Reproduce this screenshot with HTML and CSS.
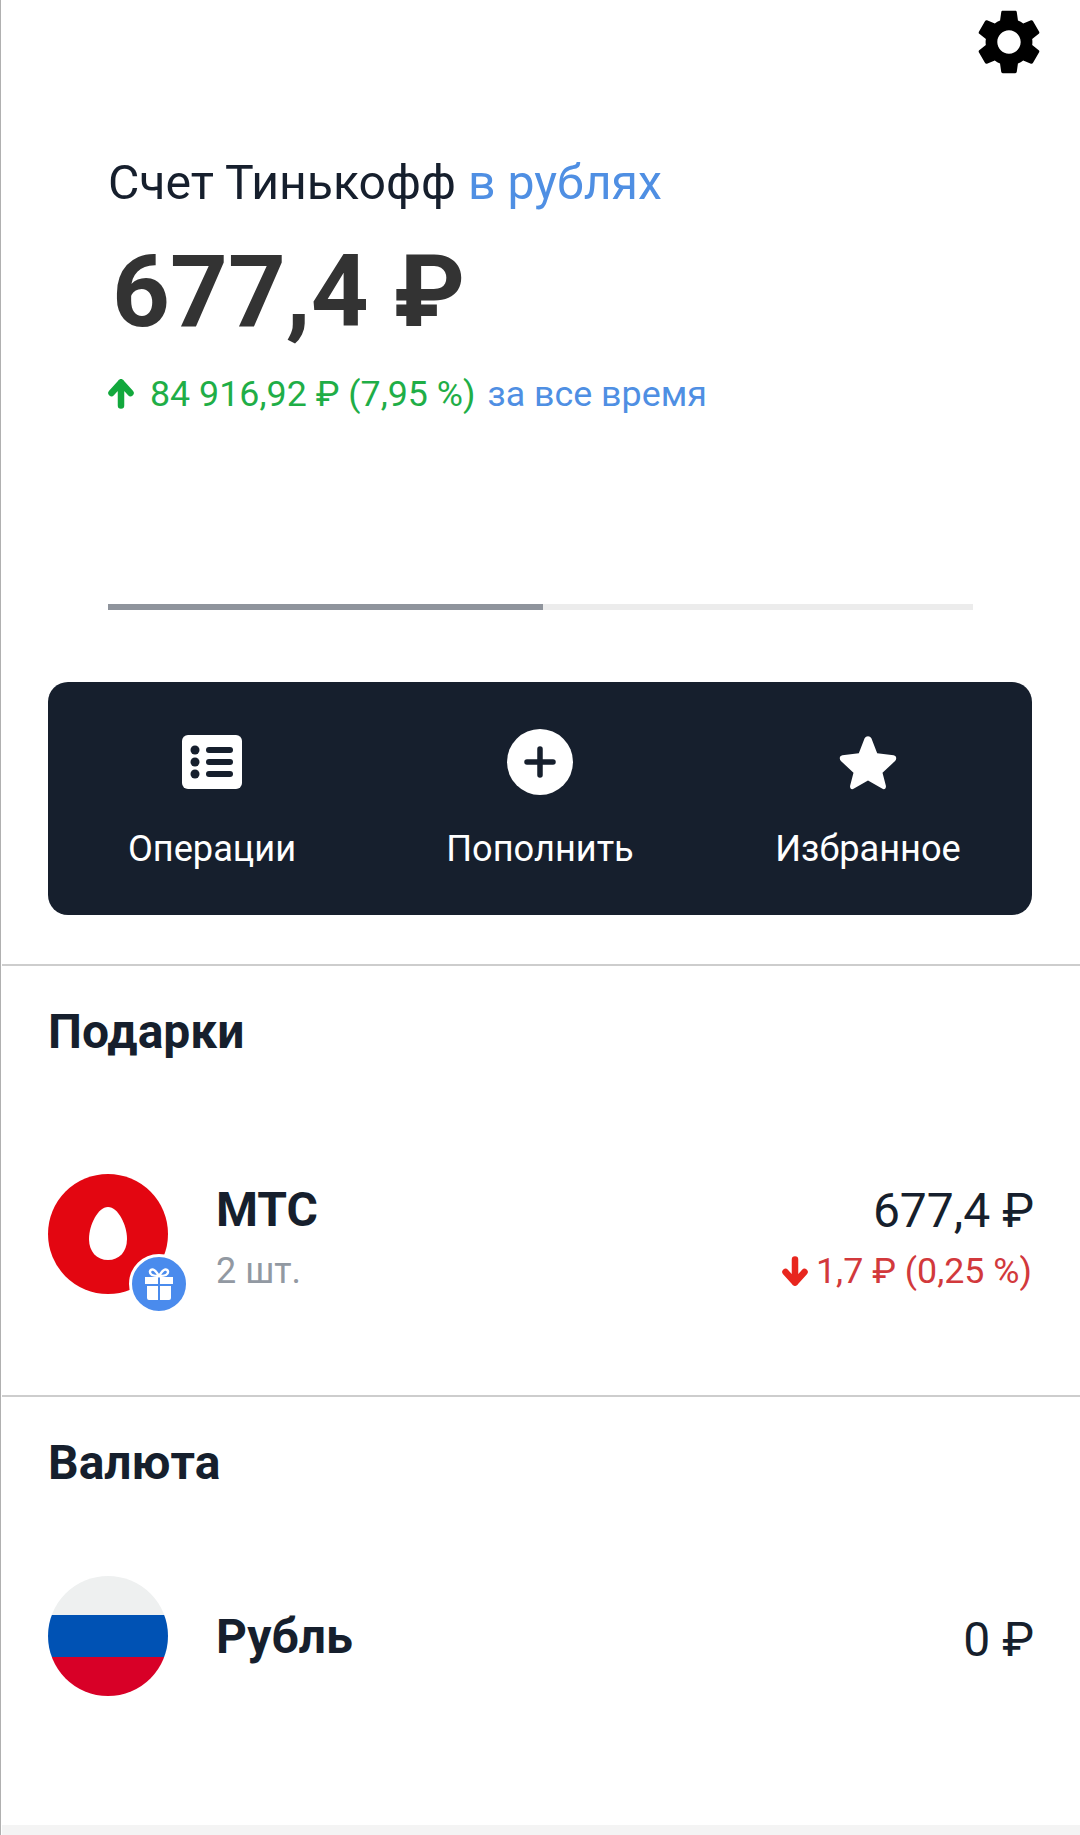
FILE: index.html
```html
<!DOCTYPE html>
<html lang="ru">
<head>
    <meta charset="UTF-8">
    <meta name="viewport" content="width=device-width, initial-scale=1.0">
    <title>Счет Тинькофф</title>
    <link rel="stylesheet" href="styles.css">
</head>
<body>
    <div class="settings-row">
        <svg class="gear" viewBox="0 0 24 24"><path d="M19.14 12.94c.04-.3.06-.61.06-.94 0-.32-.02-.64-.07-.94l2.03-1.58c.18-.14.23-.41.12-.61l-1.92-3.32c-.12-.22-.37-.29-.59-.22l-2.39.96c-.5-.38-1.03-.7-1.62-.94l-.36-2.54c-.04-.24-.24-.41-.48-.41h-3.84c-.24 0-.43.17-.47.41l-.36 2.54c-.59.24-1.13.57-1.62.94l-2.39-.96c-.22-.08-.47 0-.59.22L2.74 8.87c-.12.21-.08.47.12.61l2.03 1.58c-.05.3-.09.63-.09.94s.02.64.07.94l-2.03 1.58c-.18.14-.23.41-.12.61l1.92 3.32c.12.22.37.29.59.22l2.39-.96c.5.38 1.03.7 1.62.94l.36 2.54c.05.24.24.41.48.41h3.84c.24 0 .44-.17.47-.41l.36-2.54c.59-.24 1.13-.56 1.62-.94l2.39.96c.22.08.47 0 .59-.22l1.92-3.32c.12-.22.07-.47-.12-.61l-2.01-1.58zM12 15.6c-1.98 0-3.6-1.62-3.6-3.6s1.62-3.6 3.6-3.6 3.6 1.62 3.6 3.6-1.62 3.6-3.6 3.6z"/></svg>
    </div>

    <div class="summary">
        <div class="account-title">Счет Тинькофф <span class="link">в рублях</span></div>
        <div class="total">677,4 ₽</div>
        <div class="yield">
            <svg class="arrow-up" viewBox="0 0 26 30"><path d="M13 3.500 L3.500 14 M13 3.500 L22.500 14 M13 3.500 L13 26.500" fill="none" stroke="#12a83c" stroke-width="6.500" stroke-linecap="round"/></svg>
            <span class="green">84 916,92 ₽ (7,95 %)</span>
            <span class="link">за все время</span>
        </div>
        <div class="progress"><div class="progress-fill"></div></div>
    </div>

    <div class="actions">
        <div class="action">
            <div class="icon-box">
                <svg class="icon-list" viewBox="0 0 60 54">
                    <rect width="60" height="54" rx="6" fill="#fff"/>
                    <g fill="#161f2d">
                        <circle cx="13" cy="15" r="4.500"/><circle cx="13" cy="27" r="4.500"/><circle cx="13" cy="39" r="4.500"/>
                        <rect x="24" y="12" width="27" height="6" rx="3"/><rect x="24" y="24" width="27" height="6" rx="3"/><rect x="24" y="36" width="27" height="6" rx="3"/>
                    </g>
                </svg>
            </div>
            <div class="action-label">Операции</div>
        </div>
        <div class="action">
            <div class="icon-box">
                <svg class="icon-plus" viewBox="0 0 66 66">
                    <circle cx="33" cy="33" r="33" fill="#fff"/>
                    <path d="M33 20v26M20 33h26" stroke="#161f2d" stroke-width="5.500" stroke-linecap="round"/>
                </svg>
            </div>
            <div class="action-label">Пополнить</div>
        </div>
        <div class="action">
            <div class="icon-box">
                <svg class="icon-star" viewBox="0 0 60 56">
                    <path d="M26.500 3 C28 0 32 0 33.500 3 L39.500 18.500 L56.500 20.500 C59.500 21 60 24.500 58 26.500 L45 38.500 L48.500 52 C49 55 47 56.500 44.500 55 L30 46.500 L15.500 55 C13 56.500 11 55 11.500 52 L15 38.500 L2 26.500 C0 24.500 0.500 21 3.500 20.500 L20.500 18.500 Z" fill="#fff"/>
                </svg>
            </div>
            <div class="action-label">Избранное</div>
        </div>
    </div>

    <div class="section section-gifts">
        <div class="section-title">Подарки</div>
        <div class="asset asset-mts">
            <div class="logo-wrap">
                <svg class="logo" viewBox="0 0 120 120">
                    <circle cx="60" cy="60" r="60" fill="#e30611"/>
                    <path d="M60 33 C70 33 79 51 79 65 C79 78 71 86 60 86 C49 86 41 78 41 65 C41 51 50 33 60 33 Z" fill="#fff"/>
                </svg>
                <div class="gift-badge">
                    <svg viewBox="0 0 30 32" class="gift-icon">
                        <path d="M1 9h13v7H1zM16 9h13v7H16zM3 18h11v14H5a2 2 0 0 1-2-2zM16 18h11v12a2 2 0 0 1-2 2h-9z" fill="#fff"/>
                        <path d="M15 8 C12 3 10 1 8 1.500 C5.500 2 5 5.500 8 7 C10 8 13 8 15 8 C17 8 20 8 22 7 C25 5.500 24.500 2 22 1.500 C20 1 18 3 15 8 Z" fill="none" stroke="#fff" stroke-width="2.400"/>
                    </svg>
                </div>
            </div>
            <div class="asset-info">
                <div class="asset-name">МТС</div>
                <div class="asset-sub">2 шт.</div>
            </div>
            <div class="asset-values">
                <div class="asset-price">677,4 ₽</div>
                <div class="asset-change">
                    <svg class="arrow-down" viewBox="0 0 26 30"><path d="M13 26.500 L3.500 16 M13 26.500 L22.500 16 M13 26.500 L13 3.500" fill="none" stroke="#e8261e" stroke-width="6.500" stroke-linecap="round"/></svg>
                    <span>1,7 ₽ (0,25 %)</span>
                </div>
            </div>
        </div>
    </div>

    <div class="section section-currency">
        <div class="section-title">Валюта</div>
        <div class="asset asset-rub">
            <div class="flag"><div class="flag-white"></div><div class="flag-blue"></div><div class="flag-red"></div></div>
            <div class="asset-info">
                <div class="asset-name">Рубль</div>
            </div>
            <div class="asset-values">
                <div class="asset-price">0 ₽</div>
            </div>
        </div>
    </div>
    <div class="bottom-edge"></div>
</body>
</html>
```

FILE: styles.css
```css
* {
    box-sizing: border-box;
}
html, body {
    margin: 0;
    padding: 0;
}
body {
    width: 1080px;
    height: 1835px;
    overflow: hidden;
    background-color: #fff;
    border-left: 1px solid #b0b0b0;
    padding-left: 1px;
    font-family: Roboto, "Liberation Sans", sans-serif;
    color: #161f2d;
}
.settings-row {
    display: flex;
    justify-content: flex-end;
    height: 153px;
    padding: 3px 32px 0 0;
}
.gear {
    width: 78px;
    height: 78px;
    fill: #000;
}
.summary {
    padding: 0 107px 0 106px;
    height: 529px;
}
.account-title {
    font-size: 48.2px;
    line-height: 60px;
}
.link {
    color: #4f8fe3;
}
.total {
    margin-top: 24px;
    margin-left: 4px;
    font-size: 101px;
    line-height: 110px;
    font-weight: 700;
    color: #333;
}
.yield {
    display: flex;
    align-items: center;
    margin-top: 24px;
    font-size: 35.8px;
    line-height: 46px;
}
.arrow-up {
    width: 26px;
    height: 30px;
    margin-right: 16px;
}
.green {
    color: #1fae47;
    margin-right: 12px;
}
.progress {
    height: 6px;
    margin-top: 187px;
    background-color: #ececec;
}
.progress-fill {
    width: 435px;
    height: 6px;
    background-color: #8f949c;
}
.actions {
    display: grid;
    grid-template-columns: 1fr 1fr 1fr;
    width: 984px;
    height: 233px;
    margin-left: 46px;
    background-color: #161f2d;
    border-radius: 20px;
}
.action {
    display: flex;
    flex-direction: column;
    align-items: center;
    padding-top: 47px;
}
.icon-box {
    display: flex;
    align-items: center;
    height: 66px;
}
.icon-list {
    width: 60px;
    height: 54px;
}
.icon-plus {
    width: 66px;
    height: 66px;
}
.icon-star {
    width: 58px;
    height: 55px;
}
.action-label {
    margin-top: 31px;
    font-size: 36.2px;
    line-height: 46px;
    color: #fff;
}
.section {
    border-top: 2px solid #cdcdcd;
    padding: 0 46px;
}
.section-gifts {
    margin-top: 49px;
    height: 431px;
}
.section-currency {
    height: 430px;
}
.section-title {
    margin-top: 37px;
    font-size: 48px;
    line-height: 58px;
    font-weight: 700;
}
.asset {
    display: flex;
    align-items: flex-start;
}
.asset-mts {
    margin-top: 113px;
}
.asset-rub {
    margin-top: 84px;
}
.logo-wrap {
    position: relative;
    width: 120px;
    height: 120px;
}
.logo {
    width: 120px;
    height: 120px;
    display: block;
}
.gift-badge {
    position: absolute;
    left: 81px;
    top: 80px;
    width: 60px;
    height: 60px;
    border-radius: 50%;
    background-color: #4a8bed;
    border: 3px solid #fff;
    display: flex;
    align-items: center;
    justify-content: center;
}
.gift-icon {
    width: 30px;
    height: 32px;
}
.flag {
    width: 120px;
    height: 120px;
    border-radius: 50%;
    overflow: hidden;
}
.flag-white {
    height: 39px;
    background-color: #eef0f0;
}
.flag-blue {
    height: 42px;
    background-color: #0052b4;
}
.flag-red {
    height: 39px;
    background-color: #d80027;
}
.asset-info {
    margin-left: 48px;
    flex: 1;
}
.asset-name {
    margin-top: 7px;
    font-size: 48px;
    line-height: 58px;
    font-weight: 700;
}
.asset-rub .asset-name {
    margin-top: 32px;
}
.asset-sub {
    margin-top: 9px;
    font-size: 36px;
    line-height: 46px;
    color: #9299a2;
}
.asset-values {
    text-align: right;
}
.asset-price {
    margin-top: 8px;
    font-size: 48px;
    line-height: 58px;
}
.asset-rub .asset-price {
    margin-top: 35px;
}
.asset-change {
    display: flex;
    align-items: center;
    justify-content: flex-end;
    margin-top: 8px;
    margin-right: 2px;
    font-size: 35.8px;
    line-height: 46px;
    color: #d2393c;
}
.arrow-down {
    width: 26px;
    height: 30px;
    margin-right: 8px;
}
.bottom-edge {
    height: 10px;
    background-color: #f4f4f4;
}
```
